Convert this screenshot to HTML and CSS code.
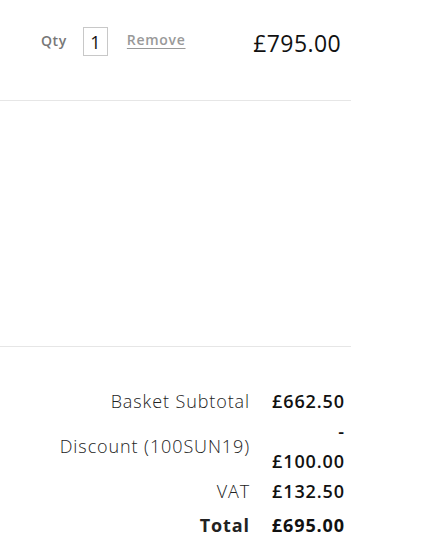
FILE: index.html
```html
<!DOCTYPE html>
<html>
<head>
<meta charset="utf-8">
<link rel="stylesheet" href="styles.css">
</head>
<body>
<div class="basket">
  <div class="item">
    <div class="controls">
      <span class="qty-label">Qty</span>
      <span class="qty-box">1</span>
      <a class="remove" href="#">Remove</a>
    </div>
    <div class="price">£795.00</div>
  </div>
  <div class="spacer"></div>
  <table class="totals">
    <tr><td class="label">Basket Subtotal</td><td class="value">£662.50</td></tr>
    <tr><td class="label">Discount (100SUN19)</td><td class="value">- £100.00</td></tr>
    <tr><td class="label">VAT</td><td class="value">£132.50</td></tr>
    <tr class="total"><td class="label">Total</td><td class="value">£695.00</td></tr>
  </table>
</div>
</body>
</html>
```
FILE: styles.css
```css
html, body {
  margin: 0;
  padding: 0;
  background: #fff;
}
body {
  font-family: "Open Sans", "Liberation Sans", sans-serif;
  color: #111;
}
.basket {
  width: 351px;
}
.item {
  display: flex;
  align-items: flex-start;
  justify-content: space-between;
  border-bottom: 1px solid #e6e6e6;
  padding: 27px 10px 0 41px;
  box-sizing: border-box;
  height: 101px;
}
.controls {
  display: flex;
  align-items: flex-start;
}
.qty-label {
  font-size: 14px;
  font-weight: 600;
  letter-spacing: 0.6px;
  color: #777;
  margin-top: 4px;
}
.qty-box {
  display: inline-flex;
  align-items: center;
  justify-content: center;
  width: 23px;
  height: 27px;
  border: 1px solid #c8c8c8;
  margin-left: 16px;
  font-size: 18px;
  color: #111;
}
.remove {
  margin-left: 19px;
  margin-top: 3px;
  font-size: 14px;
  font-weight: 600;
  letter-spacing: 0.7px;
  color: #999;
  text-decoration: underline;
  text-underline-offset: 3px;
}
.price {
  font-size: 23px;
  letter-spacing: 0.4px;
  margin-top: 0;
  color: #111;
}
.spacer {
  height: 245px;
  border-bottom: 1px solid #e6e6e6;
}
.totals {
  border-collapse: collapse;
  margin-top: 39px;
  margin-left: auto;
  margin-right: 6px;
  font-size: 18px;
  letter-spacing: 0.9px;
}
.totals td {
  padding: 0;
  vertical-align: middle;
  line-height: 30px;
}
.label {
  text-align: right;
  font-weight: 300;
  color: #222;
}
.value {
  text-align: right;
  font-weight: 600;
  width: 75px;
  padding-left: 20px !important;
}
.total td {
  font-weight: 700;
  padding-top: 4px;
}
```
